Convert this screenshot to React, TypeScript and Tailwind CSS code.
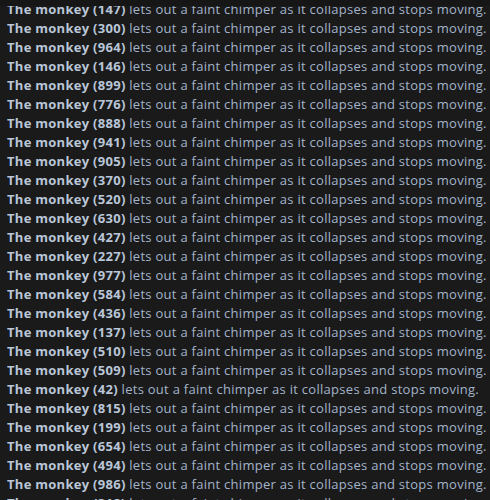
const ids = [
  147, 300, 964, 146, 899, 776, 888, 941, 905, 370, 520, 630, 427, 227, 977,
  584, 436, 137, 510, 509, 42, 815, 199, 654, 494, 986, 312,
];

function LogLine({ id }: { id: number }) {
  return (
    <p className="whitespace-nowrap leading-[19px]">
      <span className="font-bold text-[#b9c6d8]">The monkey ({id})</span>{" "}
      <span className="text-[#a3b4ca]">
        lets out a faint chimper as it collapses and stops moving.
      </span>
    </p>
  );
}

export default function App() {
  return (
    <div className="relative h-[500px] w-[490px] overflow-hidden bg-[#1a1a1a]">
      <div className="absolute inset-x-0 top-0 z-10 h-[6px] bg-[#161616]" />
      <div className="px-[7px] pt-0 font-['Open_Sans',sans-serif] text-[13px] tracking-[0.28px]">
        {ids.map((id) => (
          <LogLine key={id} id={id} />
        ))}
      </div>
    </div>
  );
}
